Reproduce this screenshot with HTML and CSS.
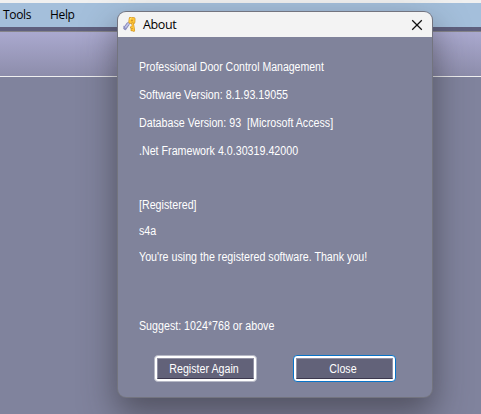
FILE: index.html
```html
<!DOCTYPE html>
<html lang="en">
<head>
<meta charset="utf-8">
<title>About</title>
<link rel="stylesheet" href="styles.css">
</head>
<body>
<div class="app">
  <div class="frame-top"></div>
  <nav class="menu"><span class="tools">Tools</span><span>Help</span></nav>
  <div class="divider"></div>
  <div class="toolbar"></div>
</div>
<section class="dialog">
  <header class="titlebar">
    <svg class="keys" width="16" height="18" viewBox="0 0 16 18" fill="none" stroke-linecap="round">
      <path d="M6 9L3 13.2" stroke="#8284b6" stroke-width="3.4"/>
      <path d="M6.5 8.5L3.2 12.8" stroke="#c0c3e8" stroke-width="1.8"/>
      <path d="M2 11.5L3.5 14.5" stroke="#8d90c2" stroke-width="1.4"/>
      <path d="M8.4 3.6L11.8 3.8L11.7 7.2L8 7.1Z" stroke="#c98b1d" stroke-width="3.2" stroke-linejoin="round"/>
      <path d="M8.4 3.6L11.8 3.8L11.7 7.2L8 7.1Z" stroke="#ffc638" stroke-width="2" stroke-linejoin="round"/>
      <path d="M10.6 8.5L11.8 15.5M9.2 12.5L11 12.2M9.8 15L11.5 15" stroke="#d19928" stroke-width="2.6"/>
      <path d="M10.6 8.5L11.8 15.3M9.4 12.4L11 12M10 14.8L11.5 14.8" stroke="#ffc338" stroke-width="1.4"/>
      <path d="M8 4.3L9.2 3.2" stroke="#fff0a0" stroke-width="1"/>
    </svg>
    <h1>About</h1>
    <svg class="close-icon" width="12" height="12" viewBox="0 0 12 12"><path d="M1.2 1.2L10.8 10.8M10.8 1.2L1.2 10.8" stroke="#111" stroke-width="1.25"/></svg>
  </header>
  <main class="content">
    <p class="row product">Professional Door Control Management</p>
    <p class="row">Software Version: 8.1.93.19055</p>
    <p class="row">Database Version: 93&nbsp; [Microsoft Access]</p>
    <p class="row">.Net Framework 4.0.30319.42000</p>
    <div class="registration">
      <p>[Registered]</p>
      <p>s4a</p>
      <p>You're using the registered software. Thank you!</p>
    </div>
    <p class="suggest">Suggest: 1024*768 or above</p>
    <div class="actions">
      <button><span class="face"><span class="label">Register Again</span></span></button>
      <button class="primary"><span class="face"><span class="label">Close</span></span></button>
    </div>
  </main>
</section>
</body>
</html>
```
FILE: styles.css
```css
* { box-sizing: border-box; }
body {
  margin: 0;
  height: 414px;
  overflow: hidden;
  background: #80839d;
  font: 12px/14px "Liberation Sans", sans-serif;
  color: #fff;
}
p, h1 { margin: 0; white-space: nowrap; }
p { transform: scaleX(.89); transform-origin: left; }
.frame-top { height: 3px; background: #f0f0f0; }
.menu {
  height: 24px;
  display: flex;
  padding-left: 3px;
  background: #a4bfdb;
  color: #000;
  font: 12px/24px "Open Sans", sans-serif;
  letter-spacing: -.35px;
}
.tools { width: 47px; }
.divider { height: 5px; background: #5f607e; border-bottom: 1px solid #858489; }
.toolbar {
  height: 45px;
  background: linear-gradient(#aaa9cf, #8d8dab);
  border-bottom: 1px solid #f0f0f0;
}
.dialog {
  position: absolute;
  left: 118px;
  top: 12px;
  width: 314px;
  height: 385px;
  border-radius: 8px;
  background: #80839b;
  box-shadow: 0 0 0 1px #73747f, 0 16px 34px 2px rgba(40, 38, 45, .52);
}
.titlebar {
  height: 25px;
  display: flex;
  align-items: center;
  padding: 0 9px 0 4px;
  border-radius: 8px 8px 0 0;
  background: #f3f3f3;
  color: #000;
}
.keys { margin-top: -1px; }
h1 {
  margin-left: 5px;
  flex: 1;
  font: 12.5px/24px "Open Sans", sans-serif;
  letter-spacing: -.35px;
}
.content { padding: 23px 21px 0; }
.row { height: 28px; }
.product { transform: scaleX(.877); }
.registration { margin-top: 26px; }
.registration p { height: 26px; }
.suggest { margin-top: 43px; }
.actions {
  display: flex;
  justify-content: space-between;
  margin: 22px 15px 0;
}
button {
  width: 103px;
  height: 27px;
  padding: 0;
  border: 1px solid #b6b8c6;
  border-radius: 4px;
  background: #fff;
  color: #fff;
  font: 12px/21px "Liberation Sans", sans-serif;
}
.face {
  display: block;
  height: 21px;
  margin: 2px;
  border: 1px solid #9292a5;
  border-bottom-color: #3c384e;
  background: #626279;
}
.label { display: block; transform: scaleX(.89); margin-left: -3px; }
.primary { border-color: #0873c8; }
```
